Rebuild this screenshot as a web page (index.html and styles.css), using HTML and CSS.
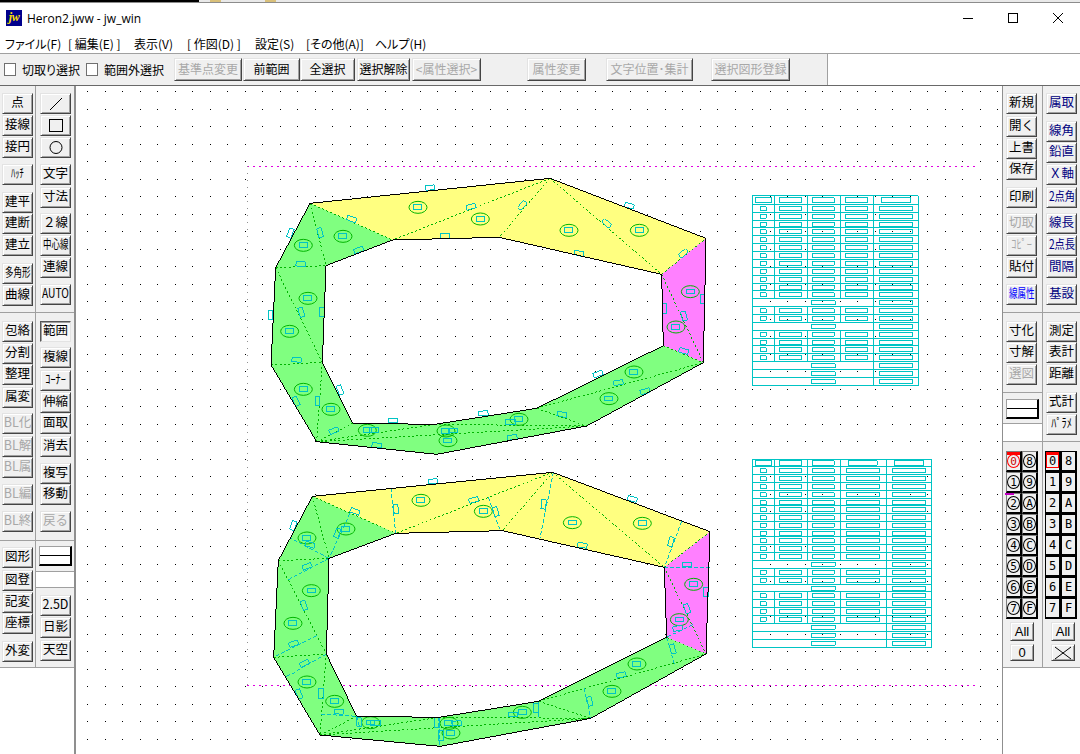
FILE: index.html
```html
<!DOCTYPE html>
<html lang="ja">
<head>
<meta charset="utf-8">
<title>Heron2.jww - jw_win</title>
<link rel="stylesheet" href="styles.css">
</head>
<body>
<div class="app">
  <div class="strip"><span class="strip-black"></span><span class="strip-tan"></span><span class="strip-tan second"></span></div>
  <header class="titlebar">
    <span class="logo">jw</span>
    <span class="title">Heron2.jww - jw_win</span>
    <div class="winctl">
      <span class="wbtn"><svg width="12" height="12" viewBox="0 0 12 12"><path d="M1 6.5H11" stroke="#000" shape-rendering="crispEdges"/></svg></span>
      <span class="wbtn"><svg width="12" height="12" viewBox="0 0 12 12"><path d="M1.5 1.5H10.5V10.5H1.5Z" fill="none" stroke="#000" shape-rendering="crispEdges"/></svg></span>
      <span class="wbtn"><svg width="12" height="12" viewBox="0 0 12 12"><path d="M1 1L11 11M11 1L1 11" fill="none" stroke="#000"/></svg></span>
    </div>
  </header>
  <nav class="menubar">
    <span class="mi w63">ファイル(F)</span>
    <span class="mi w66">[ 編集(E) ]</span>
    <span class="mi w53">表示(V)</span>
    <span class="mi w68">[ 作図(D) ]</span>
    <span class="mi w51">設定(S)</span>
    <span class="mi w69">[その他(A)]</span>
    <span class="mi">ヘルプ(H)</span>
  </nav>
  <div class="toolbar">
    <div class="tools">
      <span class="check first"></span><span class="clabel">切取り選択</span>
      <span class="check"></span><span class="clabel">範囲外選択</span>
      <span class="btn tb w68b off lead">基準点変更</span>
      <span class="btn tb w57b gap1">前範囲</span>
      <span class="btn tb w55b">全選択</span>
      <span class="btn tb w53b gap2">選択解除</span>
      <span class="btn tb w69b off gap2">&lt;属性選択&gt;</span>
      <span class="btn tb w59b off gap46">属性変更</span>
      <span class="btn tb w87b off gap20">文字位置･集計</span>
      <span class="btn tb w79b off gap18">選択図形登録</span>
    </div>
  </div>
  <div class="main">
    <aside class="left">
      <section class="sec s1">
        <div class="col c-a">
          <span class="btn m7">点</span><span class="btn m1">接線</span><span class="btn m1">接円</span>
          <span class="btn m6"><span class="sq">ﾊｯﾁ</span></span><span class="btn m7">建平</span><span class="btn m0">建断</span>
          <span class="btn m1">建立</span><span class="btn m7"><span class="sq">多角形</span></span><span class="btn m1">曲線</span>
        </div>
        <div class="col c-b">
          <span class="btn m7"><svg width="16" height="16" viewBox="0 0 16 16"><path d="M2 15L14 3" stroke="#000" fill="none"/></svg></span>
          <span class="btn m1"><svg width="16" height="16" viewBox="0 0 16 16"><path d="M1.5 2.5H14.5V14.5H1.5Z" stroke="#000" fill="none" shape-rendering="crispEdges"/></svg></span>
          <span class="btn m1"><svg width="16" height="16" viewBox="0 0 16 16"><circle cx="8" cy="8.5" r="6" stroke="#000" fill="none"/></svg></span>
          <span class="btn m6">文字</span><span class="btn m2">寸法</span><span class="btn m5">２線</span>
          <span class="btn m1"><span class="sq">中心線</span></span><span class="btn m1">連線</span><span class="btn m6"><span class="sq2">AUTO</span></span>
        </div>
      </section>
      <section class="sec s2">
        <div class="col c-a">
          <span class="btn m8">包絡</span><span class="btn m1">分割</span><span class="btn m0">整理</span>
          <span class="btn m2">属変</span><span class="btn m5 off">BL化</span><span class="btn m2 off">BL解</span>
          <span class="btn m0 off">BL属</span><span class="btn m6 off">BL編</span><span class="btn m6 off">BL終</span>
        </div>
        <div class="col c-b">
          <span class="btn m8 pressed">範囲</span><span class="btn m5">複線</span><span class="btn m2"><span class="sq2">ｺｰﾅｰ</span></span>
          <span class="btn m1">伸縮</span><span class="btn m0">面取</span><span class="btn m2">消去</span>
          <span class="btn m6">複写</span><span class="btn m0">移動</span><span class="btn m6 off">戻る</span>
        </div>
      </section>
      <section class="sec s3">
        <div class="col c-a">
          <span class="btn m6">図形</span><span class="btn m2">図登</span><span class="btn m1">記変</span>
          <span class="btn m0">座標</span><span class="btn m7">外変</span>
        </div>
        <div class="col c-b">
          <span class="btn linebtn m5"><i class="hline"></i></span>
          <div class="blank"></div>
          <span class="btn m7">2.5D</span><span class="btn m1">日影</span><span class="btn m2">天空</span>
        </div>
      </section>
    </aside>

    <main class="canvas">
      <svg class="draw" width="926" height="668" viewBox="76 86 926 668">
        <defs>
          <g id="mk"><ellipse rx="27" ry="18" class="el"/><rect x="-12" y="-7" width="24" height="14" class="cy"/></g>
          <rect id="rh" x="-14" y="-7" width="28" height="14" class="cy"/>
          <rect id="rv" x="-7" y="-14" width="14" height="28" class="cy"/>
          <path id="t1f" class="tl" d="M22 0H520M22 0V26M88 0V26M187 0V26M286 0V26M385 0V26M520 0V26M31 6h49v14h-49zM103 6h67v14h-67zM202 6h66v14h-66zM301 6h67v14h-67zM409 6h88v14h-88z"/>
          <path id="t1r" class="tl" d="M22 0H520M22 0V24M88 0V24M187 0V24M286 0V24M385 0V24M520 0V24M46 6h18v12h-18zM103 6h67v12h-67zM202 6h66v12h-66zM301 6h67v12h-67zM403 6h100v12h-100z"/>
          <path id="t1m" class="tl" d="M22 0H520M22 0V24M385 0V24M520 0V24M199 6h72v12h-72zM403 6h100v12h-100z"/>
          <path id="t2f" class="tl" d="M22 0H561M22 0V24M88 0V24M187 0V24M286 0V24M424 0V24M561 0V24M31 4h49v14h-49zM103 4h67v14h-67zM202 4h66v14h-66zM310 4h87v14h-87zM448 4h88v14h-88z"/>
          <path id="t2r" class="tl" d="M22 0H561M22 0V24M88 0V24M187 0V24M286 0V24M424 0V24M561 0V24M46 6h18v12h-18zM103 6h67v12h-67zM202 6h66v12h-66zM304 6h100v12h-100zM442 6h100v12h-100z"/>
          <path id="t2m" class="tl" d="M22 0H561M22 0V24M424 0V24M561 0V24M199 6h72v12h-72zM442 6h100v12h-100z"/>
        </defs>

        <path class="dots" d="M87 91H1000M87 109H1000M87 126H1000M87 144H1000M87 161H1000M87 179H1000M87 196H1000M87 214H1000M87 231H1000M87 249H1000M87 266H1000M87 284H1000M87 301H1000M87 319H1000M87 336H1000M87 354H1000M87 371H1000M87 389H1000M87 406H1000M87 424H1000M87 441H1000M87 459H1000M87 476H1000M87 494H1000M87 511H1000M87 529H1000M87 546H1000M87 564H1000M87 581H1000M87 599H1000M87 616H1000M87 634H1000M87 651H1000M87 669H1000M87 686H1000M87 704H1000M87 721H1000M87 739H1000"/>

        <path class="frh" d="M247 166H975M247 685H975"/>
        <path class="frv" d="M247 166V685"/>

        <g transform="translate(260 170) scale(.33333)">
          <polygon class="fy" points="150,100 870,25 1338,205 1205,313 717,202 398,210"/>
          <polygon class="fm" points="1338,205 1330,578 1210,527 1205,313"/>
          <polygon class="fg" points="150,100 398,210 198,287 187,577 278,760 525,763 830,715 1210,527 1330,578 980,768 530,853 170,815 33,585 47,293"/>
          <path class="gd" d="M150 100L398 210M150 100L198 287M47 293L198 287M47 293L187 577M33 585L187 577M187 577L170 815M170 815L278 760M170 815L525 763M170 815L980 768M525 763L980 768M830 715L980 768M830 715L1330 578M1210 527L1330 578M1205 313L1330 578M1205 313L1338 205M870 25L1205 313M870 25L717 202M870 25L398 210"/>
          <g>
            <use href="#mk" x="474" y="112"/><use href="#mk" x="661" y="147"/><use href="#mk" x="927" y="181"/><use href="#mk" x="1138" y="181"/><use href="#mk" x="249" y="199"/><use href="#mk" x="130" y="226"/><use href="#mk" x="144" y="385"/><use href="#mk" x="89" y="484"/><use href="#mk" x="130" y="658"/><use href="#mk" x="213" y="718"/><use href="#mk" x="322" y="781"/><use href="#mk" x="558" y="783"/><use href="#mk" x="564" y="812"/><use href="#mk" x="777" y="748"/><use href="#mk" x="1047" y="686"/><use href="#mk" x="1122" y="606"/><use href="#mk" x="1291" y="365"/><use href="#mk" x="1248" y="471"/>
            <use href="#rh" transform="translate(510 53) rotate(-6)"/><use href="#rh" transform="translate(275 147) rotate(20)"/><use href="#rh" transform="translate(633 110) rotate(-15)"/><use href="#rh" transform="translate(787 106) rotate(-50)"/><use href="#rv" transform="translate(180 188) rotate(-15)"/><use href="#rv" transform="translate(91 189) rotate(20)"/><use href="#rh" transform="translate(296 240) rotate(-20)"/><use href="#rh" transform="translate(122 282) rotate(5)"/><use href="#rh" transform="translate(555 198) rotate(-3)"/><use href="#rh" transform="translate(957 250) rotate(12)"/><use href="#rh" transform="translate(1040 160) rotate(40)"/><use href="#rh" transform="translate(1108 107) rotate(15)"/><use href="#rh" transform="translate(1270 250) rotate(-40)"/><use href="#rv" transform="translate(124 427) rotate(-15)"/><use href="#rv" transform="translate(187 427)"/><use href="#rv" transform="translate(32 435)"/><use href="#rv" transform="translate(1214 416)"/><use href="#rv" transform="translate(1328 388)"/><use href="#rv" transform="translate(1272 438) rotate(-15)"/><use href="#rh" transform="translate(1271 543) rotate(15)"/><use href="#rh" transform="translate(110 569) rotate(3)"/><use href="#rv" transform="translate(240 660) rotate(-20)"/><use href="#rv" transform="translate(108 694) rotate(-25)"/><use href="#rv" transform="translate(173 693)"/><use href="#rh" transform="translate(222 782) rotate(-22)"/><use href="#rh" transform="translate(670 730) rotate(-5)"/><use href="#rh" transform="translate(1014 612) rotate(-20)"/><use href="#rh" transform="translate(1075 638) rotate(-10)"/><use href="#rh" transform="translate(1155 664) rotate(-15)"/><use href="#rh" transform="translate(906 733) rotate(12)"/><use href="#rh" transform="translate(399 752)"/><use href="#rh" transform="translate(350 826) rotate(3)"/><use href="#rh" transform="translate(757 802) rotate(-8)"/><use href="#rh" transform="translate(752 757)"/><use href="#rh" transform="translate(343 781)"/><use href="#rh" transform="translate(580 782)"/>
          </g>
          <path class="ol" d="M150 100L870 25L1338 205L1330 578L980 768L530 853L170 815L33 585L47 293ZM398 210L717 202L1205 313L1210 527L830 715L525 763L278 760L187 577L198 287Z"/>
        </g>

        <g transform="translate(260 464) scale(.33333)">
          <polygon class="fy" points="157,97 878,25 1350,203 1213,310 727,200 407,208"/>
          <polygon class="fm" points="1350,203 1338,570 1220,520 1213,310"/>
          <polygon class="fg" points="157,97 407,208 207,283 199,570 290,757 537,760 836,712 1220,520 1338,570 992,763 540,847 180,813 41,580 55,290"/>
          <path class="gd" d="M157 97L407 208M157 97L207 283M55 290L207 283M55 290L199 570M41 580L199 570M199 570L180 813M180 813L290 757M180 813L537 760M180 813L992 763M537 760L992 763M836 712L992 763M836 712L1338 570M1220 520L1338 570M1213 310L1338 570M1213 310L1350 203M878 25L1213 310M878 25L727 200M878 25L407 208"/>
          <path class="cd" d="M393 72L407 208M685 100L720 198M880 25L840 222M1265 172L1213 310M1213 310L1350 312M1298 482L1220 520M1220 520L1243 600M972 672L992 763M836 712L836 765M535 760L540 847M290 757L300 795M183 750L290 757M170 515L41 580M199 570L75 640M207 283L85 347M207 283L90 222M270 148L207 283"/>
          <g>
            <use href="#mk" x="483" y="109"/><use href="#mk" x="670" y="142"/><use href="#mk" x="937" y="176"/><use href="#mk" x="1147" y="178"/><use href="#mk" x="258" y="195"/><use href="#mk" x="141" y="222"/><use href="#mk" x="154" y="380"/><use href="#mk" x="99" y="478"/><use href="#mk" x="141" y="654"/><use href="#mk" x="224" y="712"/><use href="#mk" x="332" y="776"/><use href="#mk" x="567" y="778"/><use href="#mk" x="573" y="807"/><use href="#mk" x="787" y="745"/><use href="#mk" x="1056" y="682"/><use href="#mk" x="1131" y="600"/><use href="#mk" x="1301" y="361"/><use href="#mk" x="1258" y="467"/>
            <use href="#rh" transform="translate(519 52) rotate(-5)"/><use href="#rh" transform="translate(641 108) rotate(-15)"/><use href="#rv" transform="translate(408 135) rotate(-8)"/><use href="#rv" transform="translate(707 143) rotate(-15)"/><use href="#rv" transform="translate(851 121) rotate(5)"/><use href="#rh" transform="translate(285 142) rotate(20)"/><use href="#rv" transform="translate(232 207) rotate(20)"/><use href="#rv" transform="translate(100 185) rotate(20)"/><use href="#rh" transform="translate(150 242) rotate(15)"/><use href="#rh" transform="translate(141 307) rotate(-20)"/><use href="#rv" transform="translate(132 424) rotate(-20)"/><use href="#rh" transform="translate(101 539) rotate(-20)"/><use href="#rh" transform="translate(133 598) rotate(-25)"/><use href="#rv" transform="translate(117 690) rotate(-20)"/><use href="#rv" transform="translate(183 689)"/><use href="#rh" transform="translate(237 743) rotate(5)"/><use href="#rv" transform="translate(297 774) rotate(-5)"/><use href="#rh" transform="translate(347 778)"/><use href="#rv" transform="translate(532 776)"/><use href="#rv" transform="translate(544 815)"/><use href="#rh" transform="translate(590 778) rotate(-5)"/><use href="#rh" transform="translate(760 752)"/><use href="#rv" transform="translate(828 733)"/><use href="#rv" transform="translate(989 712) rotate(-15)"/><use href="#rh" transform="translate(1084 633) rotate(-12)"/><use href="#rv" transform="translate(1238 555) rotate(-15)"/><use href="#rh" transform="translate(1117 105) rotate(15)"/><use href="#rh" transform="translate(967 244) rotate(8)"/><use href="#rv" transform="translate(1233 233) rotate(15)"/><use href="#rh" transform="translate(1281 302)"/><use href="#rv" transform="translate(1338 384)"/><use href="#rv" transform="translate(1281 434) rotate(-20)"/><use href="#rh" transform="translate(1253 493) rotate(-10)"/>
          </g>
          <path class="ol" d="M157 97L878 25L1350 203L1338 570L992 763L540 847L180 813L41 580L55 290ZM407 208L727 200L1213 310L1220 520L836 712L537 760L290 757L199 570L207 283Z"/>
        </g>

        <g transform="translate(745 190) scale(.33333)">
          <use href="#t1f" y="18"/><use href="#t1r" y="44"/><use href="#t1r" y="67"/><use href="#t1r" y="91"/><use href="#t1r" y="113"/><use href="#t1r" y="137"/><use href="#t1r" y="161"/><use href="#t1r" y="185"/><use href="#t1r" y="208"/><use href="#t1r" y="232"/><use href="#t1r" y="256"/><use href="#t1r" y="280"/><use href="#t1r" y="303"/><use href="#t1m" y="326"/><use href="#t1r" y="350"/><use href="#t1r" y="373"/><use href="#t1m" y="397"/><use href="#t1r" y="421"/><use href="#t1r" y="445"/><use href="#t1r" y="468"/><use href="#t1r" y="492"/><use href="#t1m" y="515"/><use href="#t1m" y="539"/><use href="#t1m" y="563"/>
          <path class="tl" d="M22 586H520"/>
        </g>
        <g transform="translate(745 455) scale(.33333)">
          <use href="#t2f" y="13"/><use href="#t2r" y="36"/><use href="#t2r" y="59"/><use href="#t2r" y="83"/><use href="#t2r" y="107"/><use href="#t2r" y="131"/><use href="#t2r" y="153"/><use href="#t2r" y="176"/><use href="#t2r" y="199"/><use href="#t2r" y="223"/><use href="#t2r" y="246"/><use href="#t2r" y="269"/><use href="#t2r" y="292"/><use href="#t2m" y="316"/><use href="#t2r" y="340"/><use href="#t2r" y="364"/><use href="#t2m" y="388"/><use href="#t2r" y="411"/><use href="#t2r" y="434"/><use href="#t2r" y="457"/><use href="#t2r" y="481"/><use href="#t2m" y="505"/><use href="#t2m" y="529"/><use href="#t2m" y="553"/>
          <path class="tl" d="M22 577H561"/>
        </g>
      </svg>
    </main>

    <aside class="right">
      <section class="sec s1">
        <div class="col c-c">
          <span class="btn m7">新規</span><span class="btn m2">開く</span><span class="btn m1">上書</span><span class="btn m0">保存</span>
          <span class="btn m7">印刷</span><span class="btn m5 off">切取</span><span class="btn m1 off"><span class="sq2">ｺﾋﾟｰ</span></span><span class="btn m1">貼付</span>
          <span class="btn m6 blue"><span class="sq">線属性</span></span>
        </div>
        <div class="col c-d">
          <span class="btn m7 navy">属取</span><span class="btn m7 navy">線角</span><span class="btn m0 navy">鉛直</span><span class="btn m1 navy">Ｘ軸</span>
          <span class="btn m2 navy"><span class="sq2">2点角</span></span><span class="btn m5 navy">線長</span><span class="btn m1 navy"><span class="sq2">2点長</span></span><span class="btn m1 navy">間隔</span>
          <span class="btn m6 navy">基設</span>
        </div>
      </section>
      <section class="sec s4">
        <div class="col c-c">
          <span class="btn m8">寸化</span><span class="btn m0">寸解</span><span class="btn m1 off">選図</span>
          <div class="rule"></div>
          <span class="btn linebtn m6"><i class="hline"></i></span>
          <div class="blank tail"></div>
        </div>
        <div class="col c-d">
          <span class="btn m8">測定</span><span class="btn m0">表計</span><span class="btn m1">距離</span>
          <span class="btn m7">式計</span><span class="btn m1"><span class="sq2">ﾊﾟﾗﾒ</span></span>
        </div>
      </section>
      <section class="sec s5">
        <div class="col c-c">
          <div class="layers">
            <span class="lay cur"><b class="cir red">0</b></span><span class="lay"><b class="cir">8</b></span>
            <span class="lay"><b class="cir">1</b></span><span class="lay"><b class="cir">9</b></span>
            <span class="lay mark"><b class="cir">2</b></span><span class="lay"><b class="cir">A</b></span>
            <span class="lay"><b class="cir">3</b></span><span class="lay"><b class="cir">B</b></span>
            <span class="lay"><b class="cir">4</b></span><span class="lay"><b class="cir">C</b></span>
            <span class="lay"><b class="cir">5</b></span><span class="lay"><b class="cir">D</b></span>
            <span class="lay"><b class="cir">6</b></span><span class="lay"><b class="cir">E</b></span>
            <span class="lay"><b class="cir">7</b></span><span class="lay"><b class="cir">F</b></span>
          </div>
          <span class="btn lbtn a1">All</span>
          <span class="btn lbtn a2">0</span>
        </div>
        <div class="col c-d">
          <div class="layers two">
            <span class="lay cur"><b class="box red">0</b></span><span class="lay"><b class="box">8</b></span>
            <span class="lay"><b class="box">1</b></span><span class="lay"><b class="box">9</b></span>
            <span class="lay"><b class="box">2</b></span><span class="lay"><b class="box">A</b></span>
            <span class="lay"><b class="box">3</b></span><span class="lay"><b class="box">B</b></span>
            <span class="lay"><b class="box">4</b></span><span class="lay"><b class="box">C</b></span>
            <span class="lay"><b class="box">5</b></span><span class="lay"><b class="box">D</b></span>
            <span class="lay"><b class="box">6</b></span><span class="lay"><b class="box">E</b></span>
            <span class="lay"><b class="box">7</b></span><span class="lay"><b class="box">F</b></span>
          </div>
          <span class="btn lbtn a1">All</span>
          <span class="btn lbtn a2"><svg width="18" height="14" viewBox="0 0 18 14"><path d="M1 1L17 13M17 1L1 13" stroke="#000" fill="none"/></svg></span>
        </div>
      </section>
    </aside>
  </div>
</div>
</body>
</html>
```
FILE: styles.css
```css
* { box-sizing: border-box; }
html, body { margin: 0; padding: 0; background: #fff; }
body { font-family: "Noto Sans CJK JP", "Noto Sans", sans-serif; font-size: 12px; color: #000; }
.app { width: 1080px; height: 754px; display: flex; flex-direction: column; overflow: hidden; background: #fff; }

/* window strip above the title bar */
.strip { height: 3px; flex: none; display: flex; background: #e9e9e9; border-bottom: 1px solid #8c8c8c; }
.strip-black { width: 199px; height: 2px; background: #000; }
.strip-tan { width: 11px; height: 2px; margin-left: 11px; background: #d9c07a; }
.strip-tan.second { margin-left: 44px; }

.titlebar { height: 30px; flex: none; display: flex; align-items: center; background: #fff; padding-left: 6px; }
.logo { width: 16px; height: 16px; background: #00008c; color: #ffe000; font: italic bold 12px/15px "Liberation Serif", serif; text-align: center; letter-spacing: -.5px; }
.title { margin-left: 5px; font: 12px "Open Sans", "Noto Sans", sans-serif; white-space: nowrap; }
.winctl { margin-left: auto; display: flex; }
.wbtn { width: 45px; height: 30px; display: flex; align-items: center; justify-content: center; }

.menubar { height: 20px; flex: none; display: flex; align-items: center; padding-left: 5px; font-size: 12px; font-feature-settings: "palt"; background: #fff; }
.mi { white-space: nowrap; }
.w63 { width: 63px; } .w66 { width: 66px; } .w53 { width: 53px; } .w68 { width: 68px; } .w51 { width: 51px; } .w69 { width: 69px; }

.toolbar { height: 33px; flex: none; border-top: 1px solid #a0a0a0; border-bottom: 1px solid #696969; background: #fff; }
.tools { width: 828px; height: 31px; display: flex; align-items: center; padding-left: 4px; background: #f0f0f0; border-right: 1px solid #a0a0a0; }
.check { width: 12px; height: 13px; margin-left: 6px; background: #fff; border: 1px solid #707070; flex: none; }
.check.first { margin-left: 0; }
.clabel { margin-left: 6px; white-space: nowrap; font-size: 12px; font-feature-settings: "palt"; width: 58px; }
.lead { margin-left: 12px; }
.gap1 { margin-left: 1px; }
.gap2 { margin-left: 2px; }
.gap46 { margin-left: 46px; }
.gap20 { margin-left: 20px; }
.gap18 { margin-left: 18px; }
.tools .tb { flex: none; height: 23px; font-size: 12px; white-space: nowrap; font-feature-settings: "palt"; }
.tools .w68b { width: 68px; } .tools .w57b { width: 57px; } .tools .w55b { width: 55px; } .tools .w53b { width: 53px; } .tools .w69b { width: 69px; }
.tools .w59b { width: 59px; } .tools .w87b { width: 87px; } .tools .w79b { width: 79px; }

.main { flex: 1; display: flex; min-height: 0; }
.left { width: 76px; flex: none; border-right: 2px solid #8f8f8f; background: #fff; }
.right { width: 78px; flex: none; border-left: 1px solid #8f8f8f; background: #fff; }
.canvas { width: 926px; flex: none; background: #fff; overflow: hidden; }
.draw { display: block; }

.sec { display: flex; background: #f0f0f0; border-bottom: 1px solid #a0a0a0; }
.s1 { height: 227px; }
.s2 { height: 228px; }
.s3 { height: 127px; }
.s4 { height: 129px; }
.s5 { height: 226px; }
.col { display: flex; flex-direction: column; align-items: flex-start; }
.c-a { width: 36px; padding-left: 2px; border-right: 1px solid #a0a0a0; }
.c-b { flex: 1; padding-left: 4px; }
.c-c { width: 40px; padding-left: 3px; border-right: 1px solid #a0a0a0; }
.c-d { flex: 1; padding-left: 3px; }

.btn { width: 31px; height: 21px; flex: none; display: flex; align-items: center; justify-content: center; overflow: hidden; white-space: nowrap;
  padding-bottom: 2px; line-height: 1; background: #f0f0f0; border: 1px solid; border-color: #e3e3e3 #444 #444 #e3e3e3;
  box-shadow: inset 1px 1px 0 #fff, inset -1px -1px 0 #a0a0a0; font-size: 12.5px; }
.off { color: #a8a8a8; }
.navy { color: #000080; }
.blue { color: #0000ff; }
.pressed { border-color: #555 #e3e3e3 #e3e3e3 #555; box-shadow: inset 1px 1px 0 #a0a0a0; background: #f8f8f8; }
.sq { display: inline-block; transform: scaleX(.68); }
.sq2 { display: inline-block; transform: scaleX(.82); }
.m0 { margin-top: 0; } .m1 { margin-top: 1px; } .m2 { margin-top: 2px; } .m5 { margin-top: 5px; } .m6 { margin-top: 6px; } .m7 { margin-top: 7px; } .m8 { margin-top: 8px; }

.linebtn { width: 33px; height: 20px; padding: 0; background: #fff; border-color: #a0a0a0 #000 #000 #a0a0a0; border-width: 1px 2px 2px 1px; box-shadow: none; }
.c-b .linebtn { margin-left: -1px; }
.hline { display: block; width: 100%; height: 1px; background: #000; }
.blank { align-self: stretch; height: 17px; margin: 5px 0 0 -4px; background: #fff; border-top: 1px solid #a0a0a0; border-bottom: 1px solid #a0a0a0; }
.blank.tail { height: 18px; margin: 4px 0 0 -3px; border-bottom: 0; }
.rule { align-self: stretch; height: 0; margin: 7px 0 0 -3px; border-top: 1px solid #a0a0a0; }

.layers { display: grid; grid-template-columns: 16px 16px; grid-auto-rows: 21px; width: 32px; margin-top: 9px; }
.layers.two { margin-left: -1px; }
.lay { position: relative; display: flex; align-items: center; justify-content: center; background: #f0f0f0; border: 1px solid #000; border-width: 1px 2px 2px 1px; }
.layers:not(.two) .lay { border-color: #808080 #000 #000 #808080; }
.cur::before { content: ""; position: absolute; left: 0; right: 0; top: 0; height: 3px; background: #f00; }
.mark::before { content: ""; position: absolute; left: -2px; top: -1px; width: 9px; height: 2px; background: #c000c0; }
.cir { width: 14px; height: 14px; border: 1px solid #000; border-radius: 50%; display: flex; align-items: center; justify-content: center; font: 11px "DejaVu Sans Mono", monospace; background: transparent; }
.box { font: 12px "DejaVu Sans Mono", monospace; }
.cir.red { color: #c00; border-color: #f00; }
.cur .box { width: 13px; height: 14px; line-height: 13px; text-align: center; border: 1px solid #f00; }
.lbtn { width: 24px; padding: 0; font: 13px "Liberation Sans", sans-serif; }
.a1 { height: 19px; margin: 3px 0 0 4px; }
.a2 { height: 17px; margin: 3px 0 0 4px; }
.c-d .lbtn { margin-left: 5px; }

/* drawing */
.dots { stroke: #000; stroke-width: 1; stroke-dasharray: 1 16.5; fill: none; shape-rendering: crispEdges; }
.frh { fill: none; stroke: #e000e0; stroke-width: 1; stroke-dasharray: 2 4; shape-rendering: crispEdges; }
.frv { fill: none; stroke: #909090; stroke-width: 1; stroke-dasharray: 1 6; shape-rendering: crispEdges; }
.fy { fill: #ffff80; } .fm { fill: #ff80ff; } .fg { fill: #80ff80; }
.gd { fill: none; stroke: #00b400; stroke-width: 3; stroke-dasharray: 6 7; shape-rendering: crispEdges; }
.cd { fill: none; stroke: #00c4c4; stroke-width: 3; stroke-dasharray: 12 6; shape-rendering: crispEdges; }
.ol { fill: none; stroke: #000; stroke-width: 3; shape-rendering: crispEdges; }
.el { fill: none; stroke: #00b400; stroke-width: 3; }
.cy { fill: none; stroke: #00c4c4; stroke-width: 3; shape-rendering: crispEdges; }
.tl { fill: none; stroke: #00c4c4; stroke-width: 3; shape-rendering: crispEdges; }
```
